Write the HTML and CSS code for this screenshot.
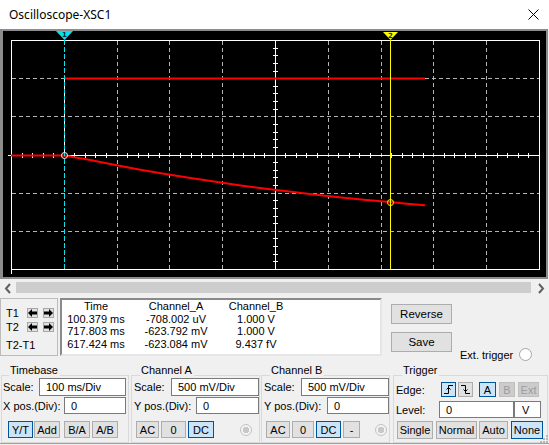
FILE: index.html
```html
<!DOCTYPE HTML>
<html>
<head>
  <title>Oscilloscope-XSC1</title>
  <meta charset="UTF-8">
  <link rel="stylesheet" href="styles.css">
</head>
<body>
  <div class="titlebar">
    <span class="title">Oscilloscope-XSC1</span>
    <svg class="close" width="11" height="11" viewBox="0 0 11 11">
      <path d="M0.5 0.5 L10.5 10.5 M10.5 0.5 L0.5 10.5" stroke="#000" stroke-width="1" fill="none"/>
    </svg>
  </div>

  <!-- scope display, drawn in page coordinates -->
  <div class="screen">
    <svg width="543" height="246" viewBox="3 31 543 246">
      <rect x="3" y="31" width="543" height="246" fill="#000"/>
      <g stroke="#b4b4b4" stroke-width="1" stroke-dasharray="4 3" fill="none">
        <path d="M64.5 41 V269 M117.5 41 V269 M169.5 41 V269 M222.5 41 V269 M328.5 41 V269 M381.5 41 V269 M433.5 41 V269 M486.5 41 V269"/>
        <path d="M12 78.5 H539 M12 116.5 H539 M12 193.5 H539 M12 231.5 H539"/>
      </g>
      <g stroke="#fff" stroke-width="1" fill="none">
        <path d="M8 155.5 H539 M275.5 41 V269"/>
        <path d="M22.5 153 V158 M32.5 153 V158 M43.5 153 V158 M53.5 153 V158 M74.5 153 V158 M85.5 153 V158 M95.5 153 V158 M106.5 153 V158 M127.5 153 V158 M138.5 153 V158 M148.5 153 V158 M159.5 153 V158 M180.5 153 V158 M191.5 153 V158 M201.5 153 V158 M212.5 153 V158 M233.5 153 V158 M243.5 153 V158 M254.5 153 V158 M264.5 153 V158 M285.5 153 V158 M296.5 153 V158 M306.5 153 V158 M317.5 153 V158 M338.5 153 V158 M349.5 153 V158 M359.5 153 V158 M370.5 153 V158 M391.5 153 V158 M402.5 153 V158 M412.5 153 V158 M423.5 153 V158 M444.5 153 V158 M454.5 153 V158 M465.5 153 V158 M475.5 153 V158 M497.5 153 V158 M507.5 153 V158 M518.5 153 V158 M528.5 153 V158"/>
        <path d="M273 48.5 H278 M273 55.5 H278 M273 63.5 H278 M273 71.5 H278 M273 86.5 H278 M273 93.5 H278 M273 101.5 H278 M273 109.5 H278 M273 124.5 H278 M273 132.5 H278 M273 139.5 H278 M273 147.5 H278 M273 162.5 H278 M273 170.5 H278 M273 177.5 H278 M273 185.5 H278 M273 200.5 H278 M273 208.5 H278 M273 216.5 H278 M273 223.5 H278 M273 238.5 H278 M273 246.5 H278 M273 254.5 H278 M273 261.5 H278"/>
        <rect x="11.5" y="40.5" width="528" height="229"/>
        <path d="M11.5 269 V274"/>
      </g>
      <!-- channel B -->
      <path d="M64 78.5 H425" stroke="#f00" stroke-width="2" fill="none"/>
      <path d="M64.5 78 V155" stroke="#fff" stroke-width="1" fill="none"/>
      <!-- channel A -->
      <polyline points="11,155.5 64,155.5 89,159.8 114,164.8 139,169.4 164,173.8 189,177.8 214,181.6 239,185.2 264,188.5 289,191.6 314,194.5 339,197.2 364,199.7 390,202.1 404,203.4 425,205.2" stroke="#f00" stroke-width="2" fill="none"/>
      <!-- cursors -->
      <path d="M64.5 40 V269" stroke="#00e4ee" stroke-width="1" stroke-dasharray="4 3" fill="none"/>
      <path d="M390.5 40 V269" stroke="#ffff00" stroke-width="1" fill="none"/>
      <polygon points="56,31 73,31 64.5,40" fill="#00e4ee"/>
      <text x="64.5" y="37" class="cur-num">1</text>
      <polygon points="383,32 398,32 390.5,40" fill="#ffff00"/>
      <text x="390.5" y="37.5" class="cur-num">2</text>
      <circle cx="64.5" cy="155.5" r="3" stroke="#fff" fill="none"/>
      <circle cx="390.5" cy="202.5" r="3" stroke="#ffff00" fill="none"/>
    </svg>
  </div>

  <div class="hscroll">
    <svg class="arrow" width="16" height="19" viewBox="0 0 16 19">
      <path d="M10 5 L6 9.5 L10 14" stroke="#606060" stroke-width="2" fill="none"/>
    </svg>
    <div class="track"></div>
    <svg class="arrow" width="18" height="19" viewBox="0 0 18 19">
      <path d="M8 5 L12 9.5 L8 14" stroke="#606060" stroke-width="2" fill="none"/>
    </svg>
  </div>

  <div class="readout">
    <div class="cursors">
      <div class="crow">
        <span class="clabel">T1</span>
        <span class="abtn"><svg width="9" height="8" viewBox="0 0 9 8"><polygon points="0,4 4,0 4,2.5 9,2.5 9,5.5 4,5.5 4,8"/></svg></span>
        <span class="abtn"><svg width="9" height="8" viewBox="0 0 9 8"><polygon points="9,4 5,0 5,2.5 0,2.5 0,5.5 5,5.5 5,8"/></svg></span>
      </div>
      <div class="crow second">
        <span class="clabel">T2</span>
        <span class="abtn"><svg width="9" height="8" viewBox="0 0 9 8"><polygon points="0,4 4,0 4,2.5 9,2.5 9,5.5 4,5.5 4,8"/></svg></span>
        <span class="abtn"><svg width="9" height="8" viewBox="0 0 9 8"><polygon points="9,4 5,0 5,2.5 0,2.5 0,5.5 5,5.5 5,8"/></svg></span>
      </div>
      <div class="cdiff">T2-T1</div>
    </div>

    <div class="values">
      <span>Time</span><span>Channel_A</span><span>Channel_B</span>
      <span>100.379 ms</span><span>-708.002 uV</span><span>1.000 V</span>
      <span>717.803 ms</span><span>-623.792 mV</span><span>1.000 V</span>
      <span>617.424 ms</span><span>-623.084 mV</span><span>9.437 fV</span>
    </div>

    <div class="actions">
      <div class="stack">
        <span class="btn wide">Reverse</span>
        <span class="btn wide">Save</span>
      </div>
      <div class="ext">
        <span>Ext. trigger</span>
        <span class="radio"></span>
      </div>
    </div>
  </div>

  <div class="groups">
    <div class="group timebase">
      <div class="group-title">Timebase</div>
      <div class="row r1"><span>Scale:</span><span class="field" style="width:87px">100 ms/Div</span></div>
      <div class="row r2"><span>X pos.(Div):</span><span class="field" style="width:62px">0</span></div>
      <div class="row r3">
        <span class="btn on" style="width:25px;margin-left:5px">Y/T</span>
        <span class="btn" style="width:26px;margin-left:1px">Add</span>
        <span class="btn" style="width:26px;margin-left:4px">B/A</span>
        <span class="btn" style="width:26px;margin-left:2px">A/B</span>
      </div>
    </div>

    <div class="group chan-a">
      <div class="group-title">Channel A</div>
      <div class="row r1"><span>Scale:</span><span class="field" style="width:88px">500 mV/Div</span></div>
      <div class="row r2"><span>Y pos.(Div):</span><span class="field" style="width:63px">0</span></div>
      <div class="row r3">
        <span class="btn" style="width:23px;margin-left:2px">AC</span>
        <span class="btn" style="width:25px;margin-left:2px">0</span>
        <span class="btn on" style="width:26px;margin-left:2px">DC</span>
        <span class="radio dim" style="margin-left:26px"></span>
      </div>
    </div>

    <div class="group chan-b">
      <div class="group-title">Channel B</div>
      <div class="row r1"><span>Scale:</span><span class="field" style="width:88px">500 mV/Div</span></div>
      <div class="row r2"><span>Y pos.(Div):</span><span class="field" style="width:62px">0</span></div>
      <div class="row r3">
        <span class="btn" style="width:24px;margin-left:2px">AC</span>
        <span class="btn" style="width:22px;margin-left:2px">0</span>
        <span class="btn on" style="width:25px;margin-left:2px">DC</span>
        <span class="btn" style="width:17px;margin-left:2px">-</span>
        <span class="radio dim" style="margin-left:15px"></span>
      </div>
    </div>

    <div class="group trigger">
      <div class="group-title">Trigger</div>
      <div class="row t1">
        <span class="tlabel" style="width:45px">Edge:</span>
        <span class="btn on" style="width:15px">
          <svg width="11" height="11" viewBox="0 0 11 11"><path d="M1 9.5 H5.5 V1.5 H10 M3.5 5.5 L5.5 3.5 L7.5 5.5" stroke="#000" stroke-width="1" fill="none"/></svg>
        </span>
        <span class="btn" style="width:15px;margin-left:2px">
          <svg width="11" height="11" viewBox="0 0 11 11"><path d="M1 1.5 H5.5 V9.5 H10 M3.5 5.5 L5.5 7.5 L7.5 5.5" stroke="#000" stroke-width="1" fill="none"/></svg>
        </span>
        <span class="btn on" style="width:17px;margin-left:6px">A</span>
        <span class="btn off" style="width:16px;margin-left:3px">B</span>
        <span class="btn off" style="width:21px;margin-left:3px">Ext</span>
      </div>
      <div class="row t2">
        <span class="tlabel" style="width:43px">Level:</span>
        <span class="field" style="width:75px;margin-left:0">0</span>
        <span class="field unit" style="width:27px;margin-left:0">V</span>
      </div>
      <div class="row t3">
        <span class="btn" style="width:36px;margin-left:1px">Single</span>
        <span class="btn" style="width:41px;margin-left:3px">Normal</span>
        <span class="btn" style="width:29px;margin-left:2px">Auto</span>
        <span class="btn on" style="width:32px;margin-left:3px">None</span>
      </div>
    </div>
  </div>
  <div class="bottom-edge"></div>

  <svg class="grip" width="9" height="9" viewBox="0 0 9 9">
    <g fill="#b8b8b8">
      <rect x="7" y="1" width="2" height="2"/>
      <rect x="4" y="4" width="2" height="2"/><rect x="7" y="4" width="2" height="2"/>
      <rect x="1" y="7" width="2" height="2"/><rect x="4" y="7" width="2" height="2"/><rect x="7" y="7" width="2" height="2"/>
    </g>
  </svg>
</body>
</html>
```

FILE: styles.css
```css
* {
  box-sizing: border-box;
}

html,
body{
  margin: 0;
}

body{
  position: relative;
  width: 549px;
  height: 445px;
  overflow: hidden;
  background: #f0f0f0;
  font-family: "Liberation Sans", Arial, sans-serif;
  font-size: 11px;
  color: #000;
}

.titlebar{
  height: 29px;
  background: #fff;
  display: flex;
  align-items: center;
  justify-content: space-between;
  padding: 0 10px 0 9px;
  font-family: "Noto Sans", sans-serif;
  font-size: 12px;
}

.screen{
  width: 548px;
  height: 250px;
  border-style: solid;
  border-width: 2px 2px 2px 3px;
  border-color: #8c8c8c;
  background: #000;
}

.screen svg{
  display: block;
}

.cur-num{
  font-family: "DejaVu Sans", sans-serif;
  font-size: 7px;
  font-weight: bold;
  fill: #0a2a40;
  text-anchor: middle;
}

.hscroll{
  height: 19px;
  display: flex;
}

.hscroll .arrow{
  display: block;
}

.track{
  flex: 1;
  height: 11px;
  margin-top: 3px;
  background: #cdcdcd;
}

/* cursor readout */
.readout{
  display: flex;
  height: 58px;
}

.cursors{
  width: 58px;
  border: 1px solid #bcbcbc;
  padding: 9px 0 0 5px;
}

.crow{
  display: flex;
  align-items: center;
  height: 10px;
}

.crow.second{
  margin-top: 4px;
}

.clabel{
  width: 21px;
}

.abtn{
  width: 11px;
  height: 10px;
  border: 1px solid #a8a8a8;
  background: #e1e1e1;
  display: flex;
  align-items: center;
  justify-content: center;
}

.abtn + .abtn{
  margin-left: 5px;
}

.abtn svg{
  display: block;
}

.cdiff{
  margin-top: 7px;
  line-height: 13px;
}

.values{
  margin-left: 2px;
  width: 322px;
  border: 2px solid;
  border-color: #8a8a8a #e6e6e6 #e6e6e6 #8a8a8a;
  background: #fff;
  display: grid;
  grid-template-columns: 68px 92px 68px;
  grid-auto-rows: 12.5px;
  align-content: start;
  line-height: 12.5px;
  text-align: center;
  white-space: nowrap;
}

.actions{
  display: flex;
  padding-left: 9px;
}

.stack{
  display: flex;
  flex-direction: column;
  padding-top: 6px;
  gap: 8px;
}

.ext{
  align-self: flex-end;
  display: flex;
  align-items: center;
  gap: 6px;
  margin: 0 0 -5px 8px;
}

.radio{
  width: 13px;
  height: 13px;
  border-radius: 50%;
  border: 1px solid #a6a6a6;
  background: #fff;
}

.radio.dim{
  width: 12px;
  height: 12px;
  border-color: #c2c2c2;
  background: radial-gradient(circle, #c8c8c8 0 3px, #f4f4f4 3.5px);
}

/* buttons and fields */
.btn{
  height: 100%;
  border: 1px solid #adadad;
  background: #e1e1e1;
  display: flex;
  align-items: center;
  justify-content: center;
  white-space: nowrap;
}

.btn.wide{
  width: 61px;
  height: 20px;
  font-size: 11.5px;
}

.btn.on{
  background: #cce4f7;
  border-color: #005499;
}

.btn.off{
  background: #cccccc;
  border-color: #bfbfbf;
  color: #9c9c9c;
}

.field{
  height: 100%;
  margin-left: auto;
  background: #fff;
  border: 1px solid #7a7a7a;
  padding-left: 6px;
  display: flex;
  align-items: center;
}

.field.unit{
  padding-left: 7px;
}

/* control groups */
.groups{
  display: flex;
  margin-top: 19px;
  padding-left: 1px;
}

.group{
  height: 68px;
  border: 1px solid #d9d9d9;
}

.group-title{
  width: max-content;
  margin: -12px 0 0 6px;
  padding: 0 2px 0 1px;
  line-height: 13px;
  background: #f0f0f0;
}

.row{
  display: flex;
  align-items: center;
  white-space: nowrap;
}

.r1{ height: 18px; margin-top: 1px; }
.r2{ height: 17px; margin-top: 1px; }
.r3{ height: 17px; margin-top: 7px; }

.t1{ height: 15px; margin-top: 5px; }
.t2{ height: 17px; margin-top: 4px; }
.t3{ height: 18px; margin-top: 3px; }

.timebase{
  width: 128px;
  padding: 0 2px 0 1px;
}

.chan-a{
  width: 129px;
  margin-left: 2px;
  padding-left: 2px;
}

.chan-b{
  width: 129px;
  margin-left: 1px;
  padding-left: 2px;
}

.trigger{
  width: 155px;
  margin-left: 3px;
  padding-left: 2px;
}

.tlabel{
  display: inline-block;
}

.bottom-edge{
  height: 2px;
  border-top: 1px solid #a0a0a0;
}

.grip{
  position: absolute;
  right: 1px;
  bottom: 2px;
}
```
